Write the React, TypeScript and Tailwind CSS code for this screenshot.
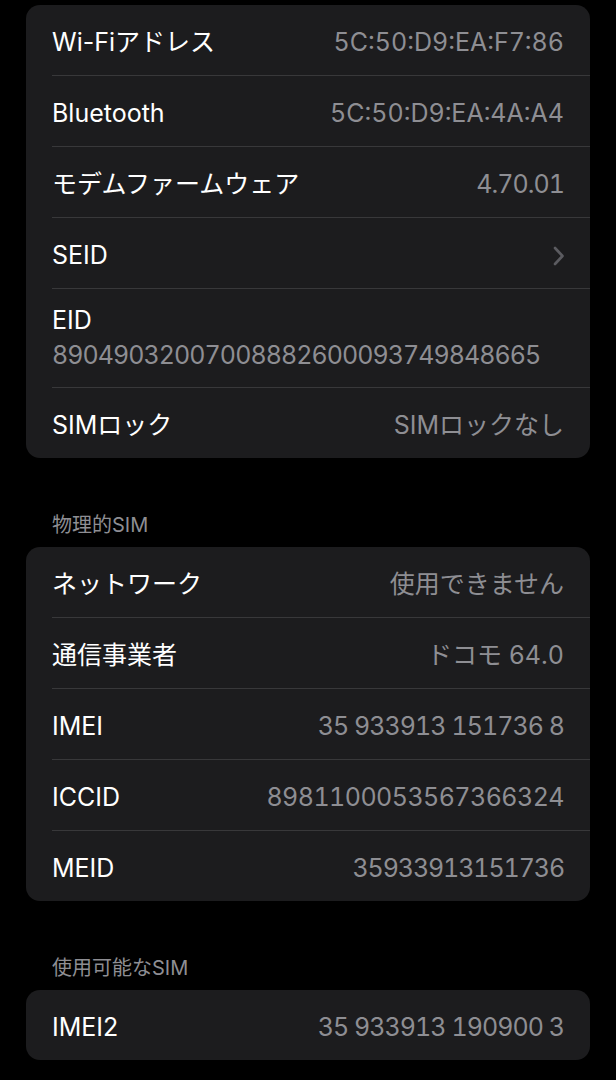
const FONT = "font-['Inter','Noto_Sans_CJK_JP',sans-serif]";

type Row = {
  label: string;
  value?: string;
  chevron?: boolean;
  stacked?: boolean;
  tight?: string;
};

// number-only values are drawn with tabular digits, tightened to match the reference widths
const deviceRows: Row[] = [
  { label: "Wi-Fiアドレス", value: "5C:50:D9:EA:F7:86" },
  { label: "Bluetooth", value: "5C:50:D9:EA:4A:A4" },
  { label: "モデムファームウェア", value: "4.70.01", tight: "tracking-[-0.95px]" },
  { label: "SEID", chevron: true },
  { label: "EID", value: "89049032007008882600093749848665", stacked: true, tight: "tracking-[-0.95px]" },
  { label: "SIMロック", value: "SIMロックなし" },
];

const physicalRows: Row[] = [
  { label: "ネットワーク", value: "使用できません" },
  { label: "通信事業者", value: "ドコモ 64.0" },
  { label: "IMEI", value: "35 933913 151736 8", tight: "tracking-[-0.95px]" },
  { label: "ICCID", value: "8981100053567366324", tight: "tracking-[-0.55px]" },
  { label: "MEID", value: "35933913151736", tight: "tracking-[-1.1px]" },
];

const availableRows: Row[] = [
  { label: "IMEI2", value: "35 933913 190900 3", tight: "tracking-[-0.95px]" },
];

function Chevron() {
  return (
    <svg width="12" height="20" viewBox="0 0 12 20" fill="none" className="mr-[-1px]">
      <path d="M2 2L9.5 10L2 18" stroke="#5b5b60" strokeWidth="2.6" strokeLinecap="round" strokeLinejoin="round" />
    </svg>
  );
}

function SettingsRow({ row, last }: { row: Row; last: boolean }) {
  if (row.stacked) {
    return (
      <div className="pl-[26px]">
        <div className={`h-[99px] flex flex-col justify-center pb-[2px] pr-[26px] ${last ? "" : "border-b border-[#38383a]"}`}>
          <div className="text-[25px] leading-[30px] text-white">{row.label}</div>
          <div className={`text-[25px] leading-[30px] text-[#8e8e93] tabular-nums mt-[5px] ${row.tight ?? ""}`}>
            {row.value}
          </div>
        </div>
      </div>
    );
  }
  return (
    <div className="pl-[26px]">
      <div
        className={`${last ? "h-[70px]" : "h-[71px] border-b border-[#38383a]"} flex items-center justify-between pt-[5px] pr-[26px]`}
      >
        <span className="text-[25px] text-white">{row.label}</span>
        {row.chevron ? (
          <Chevron />
        ) : (
          <span className={`text-[25px] text-[#8e8e93] tabular-nums ${row.tight ?? ""}`}>{row.value}</span>
        )}
      </div>
    </div>
  );
}

function Card({ rows }: { rows: Row[] }) {
  return (
    <div className="bg-[#1c1c1e] rounded-[14px] overflow-hidden">
      {rows.map((r, i) => (
        <SettingsRow key={r.label} row={r} last={i === rows.length - 1} />
      ))}
    </div>
  );
}

function SectionHeader({ title }: { title: string }) {
  return (
    <div className="mt-[55px] mb-[10px] pl-[26px] h-[24px] flex items-center text-[20px] text-[#8e8e93]">
      {title}
    </div>
  );
}

export default function App() {
  return (
    <div className={`w-[616px] h-[1080px] bg-black overflow-hidden ${FONT}`}>
      <div className="pt-[5px] pl-[26px] pr-[26px]">
        <Card rows={deviceRows} />
        <SectionHeader title="物理的SIM" />
        <Card rows={physicalRows} />
        <SectionHeader title="使用可能なSIM" />
        <Card rows={availableRows} />
      </div>
    </div>
  );
}
